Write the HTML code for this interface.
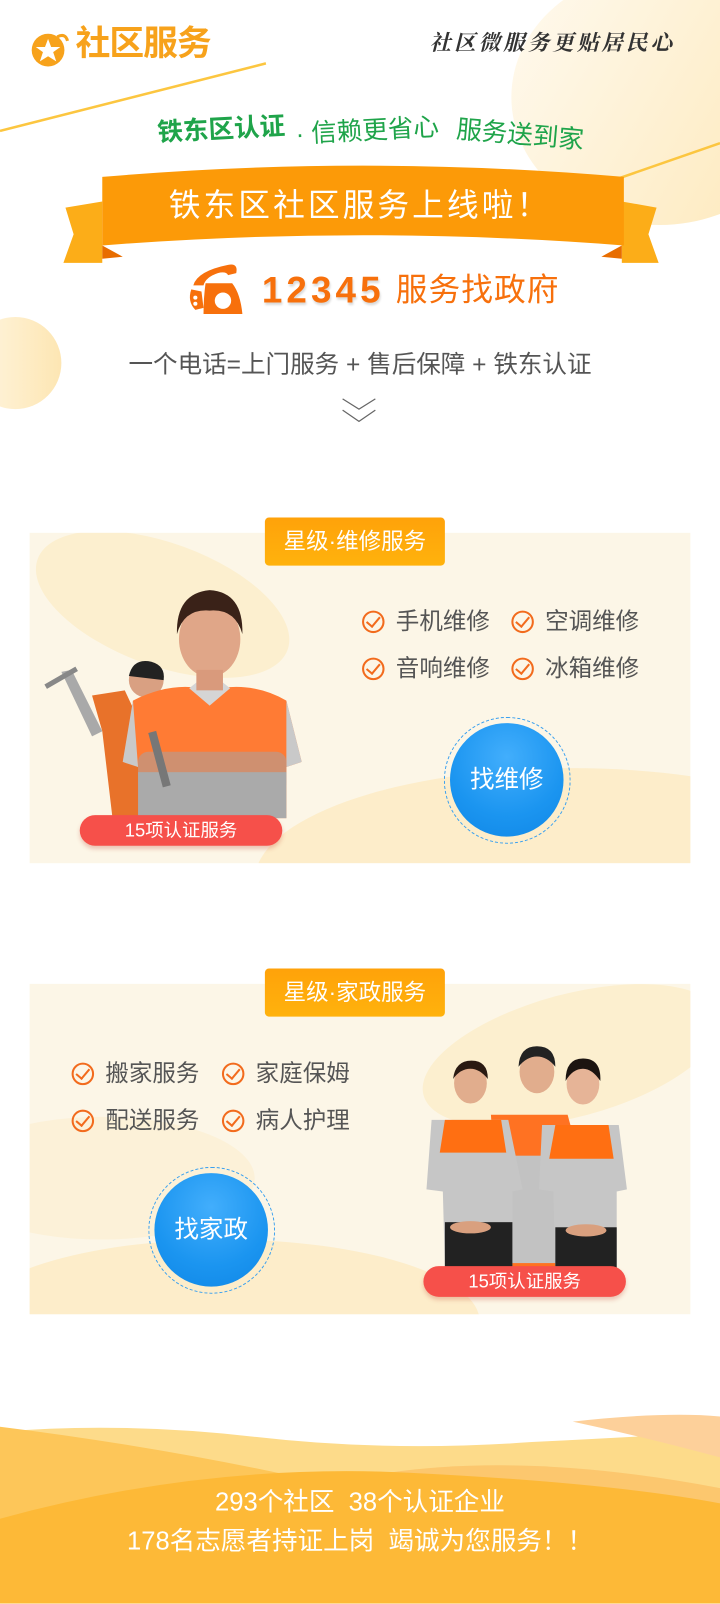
<!DOCTYPE html>
<html><head><meta charset="utf-8">
<style>
*{margin:0;padding:0;box-sizing:border-box}
html,body{width:720px;height:1604px;overflow:hidden;background:#fff}
#w{position:absolute;left:0;top:0;width:704px;height:1568px;transform:scale(1.02273);transform-origin:0 0;overflow:hidden;font-family:"Liberation Sans","Noto Sans CJK SC",sans-serif}
.a{position:absolute}
.t{position:absolute;white-space:nowrap;line-height:1}
.card{position:absolute;left:29px;width:646px;height:323px;background:#fcf6e7;overflow:hidden}
.tag{position:absolute;width:176px;height:47px;border-radius:4px;background:linear-gradient(#ffa20a,#ffb20c);color:#fff;font-size:22px;text-align:center;line-height:47px}
.chk{position:absolute;width:22px;height:22px;border:2px solid #f26b1d;border-radius:50%}
.chk:after{content:"";position:absolute;left:5px;top:1px;width:6px;height:11px;border-right:2.5px solid #f26b1d;border-bottom:2.5px solid #f26b1d;transform:rotate(40deg)}
.it{font-size:23px;color:#555}
.bc{position:absolute;width:124px;height:124px;border-radius:50%;border:1.5px dashed #3aa0ef}
.bc div{position:absolute;left:5px;top:5px;width:111px;height:111px;border-radius:50%;background:radial-gradient(circle at 50% 30%,#42aefc,#1b95f0 60%,#0f86e6);color:#fff;font-size:24px;text-align:center;line-height:111px}
.badge{position:absolute;width:198px;height:30px;border-radius:15px;background:#f6504a;color:#fff;font-size:18px;text-align:center;line-height:30px;box-shadow:0 3px 4px rgba(200,80,60,.3)}
</style></head><body><div id="w">

<div class="a" style="left:500px;top:-30px;width:290px;height:250px;border-radius:50%;background:linear-gradient(120deg,#fffaf0,#fde8b8)"></div>
<div class="a" style="left:-30px;top:310px;width:90px;height:90px;border-radius:50%;background:linear-gradient(90deg,#fff6e2,#fde6b3)"></div>
<svg class="a" style="left:0;top:0" width="704" height="260"><line x1="0" y1="128" x2="260" y2="62" stroke="#fcc640" stroke-width="2.5"/><line x1="560" y1="190" x2="704" y2="140" stroke="#fcc640" stroke-width="2.5"/></svg>

<svg class="a" style="left:28px;top:30px" width="40" height="36"><circle cx="19" cy="19" r="16" fill="#f7a21b"/><polygon points="19,8 22,16 31,16 24,21 27,30 19,25 11,30 14,21 7,16 16,16" fill="#fff"/><path d="M28 6 q8 -4 10 4" stroke="#f7a21b" stroke-width="3" fill="none"/></svg>
<div class="t" style="left:74px;top:26px;font-size:34px;font-weight:bold;color:#f7a21b;letter-spacing:-1px">社区服务</div>
<div class="t" style="left:420px;top:32px;font-size:21px;color:#333;font-family:'Liberation Serif','Noto Serif CJK SC',serif;font-weight:bold;letter-spacing:3px;font-style:italic">社区微服务更贴居民心</div>

<div class="t" style="left:154px;top:118px;font-size:25px;font-weight:bold;color:#1fa44a;transform:rotate(-3deg);transform-origin:left">铁东区认证</div>
<div class="t" style="left:289px;top:116px;font-size:25px;color:#1fa44a;transform:rotate(-3deg)">· 信赖更省心</div>
<div class="t" style="left:446px;top:120px;font-size:25px;color:#1fa44a;transform:rotate(5deg)">服务送到家</div>

<svg class="a" style="left:60px;top:155px" width="586" height="105">
<polygon points="4,48 40,42 40,102 2,102 12,74" fill="#fcad18"/>
<polygon points="582,48 548,42 548,102 584,102 574,74" fill="#fcad18"/>
<polygon points="40,85 60,96 40,98" fill="#e86d00"/>
<polygon points="548,85 528,96 548,98" fill="#e86d00"/>
<path d="M40 18 Q294 -4 550 18 L550 85 Q294 65 40 85 Z" fill="#fc9a08"/>
</svg>
<div class="t" style="left:0;width:704px;text-align:center;top:185px;font-size:31px;color:#fff;letter-spacing:3px">铁东区社区服务上线啦！</div>

<svg class="a" style="left:183px;top:257px" width="60" height="56">
<path d="M6 22 Q10 8 40 2 Q50 0 48 10 L40 12 Q38 8 30 10 Q18 14 16 22 Z" fill="#f7700c"/>
<path d="M18 20 L44 20 Q52 30 54 50 L16 50 Q16 34 18 20 Z" fill="#f7700c"/>
<circle cx="35" cy="37" r="8" fill="#fff"/>
<path d="M4 26 Q0 38 8 46 L16 44 L14 28 Z" fill="#f7700c"/>
<circle cx="8" cy="34" r="2" fill="#fff"/><circle cx="8" cy="40" r="2" fill="#fff"/>
</svg>
<div class="t" style="left:256px;top:266px;font-size:36px;font-weight:bold;color:#f7700c;letter-spacing:4px;text-shadow:1px 2px 2px rgba(0,0,0,.15)">12345</div>
<div class="t" style="left:387px;top:268px;font-size:31px;color:#f7700c;letter-spacing:1px">服务找政府</div>

<div class="t" style="left:0;width:704px;text-align:center;top:345px;font-size:24px;color:#555">一个电话=上门服务 + 售后保障 + 铁东认证</div>
<svg class="a" style="left:333px;top:388px" width="36" height="28"><path d="M2 2 L18 12 L34 2 M2 13 L18 24 L34 13" stroke="#666" stroke-width="1.2" fill="none"/></svg>

<div class="card" style="top:521px">
<div class="a" style="left:0;top:10px;width:260px;height:120px;border-radius:50%;background:#fcefcf;transform:rotate(20deg)"></div>
<div class="a" style="left:220px;top:230px;width:620px;height:220px;border-radius:50%;background:#fde9bd;opacity:.7"></div>
</div>
<div class="tag" style="left:259px;top:506px">星级·维修服务</div>
<div class="chk" style="left:354px;top:597px"></div><div class="t it" style="left:387px;top:596px">手机维修</div>
<div class="chk" style="left:500px;top:597px"></div><div class="t it" style="left:533px;top:596px">空调维修</div>
<div class="chk" style="left:354px;top:643px"></div><div class="t it" style="left:387px;top:642px">音响维修</div>
<div class="chk" style="left:500px;top:643px"></div><div class="t it" style="left:533px;top:642px">冰箱维修</div>
<svg class="a" style="left:40px;top:565px" width="260" height="240">
<path d="M50 115 L82 110 L110 170 L110 235 L70 235 L60 150 Z" fill="#e8722a"/>
<path d="M20 92 L30 90 L60 150 L50 155 Z" fill="#a9a9a9"/>
<circle cx="103" cy="100" r="17" fill="#d9a082"/><path d="M86 96 Q90 78 108 82 Q122 86 120 100 Z" fill="#222"/>
<rect x="2" y="95" width="35" height="5" fill="#888" transform="rotate(-30 20 97)"/>
<path d="M90 120 Q130 100 165 110 Q205 100 240 120 L255 180 L240 185 L240 235 L95 235 L95 185 L80 180 Z" fill="#ff7b34"/>
<path d="M90 120 L80 180 L95 185 Z M240 120 L255 180 L240 185 Z" fill="#c9c9c9"/>
<path d="M145 108 L165 125 L185 108 L175 100 L155 100 Z" fill="#d5d5d5"/>
<rect x="95" y="170" width="145" height="40" rx="10" fill="#cf9070"/>
<rect x="95" y="190" width="145" height="45" fill="#aaa"/>
<rect x="110" y="150" width="8" height="55" fill="#777" transform="rotate(-15 114 170)"/>
<ellipse cx="165" cy="60" rx="30" ry="37" fill="#e0a688"/>
<path d="M133 55 Q132 15 165 12 Q198 14 197 55 Q190 30 165 32 Q140 30 133 55 Z" fill="#3a2218"/>
<rect x="152" y="90" width="26" height="20" fill="#d99a7c"/>
</svg>
<div class="badge" style="left:78px;top:797px">15项认证服务</div>
<div class="bc" style="left:434px;top:701px"><div>找维修</div></div>

<div class="card" style="top:962px">
<div class="a" style="left:380px;top:10px;width:300px;height:120px;border-radius:50%;background:#fcefcf;transform:rotate(-15deg)"></div>
<div class="a" style="left:-60px;top:250px;width:500px;height:160px;border-radius:50%;background:#fde9bd;opacity:.7"></div>
<div class="a" style="left:-80px;top:130px;width:300px;height:120px;border-radius:50%;background:#fcefcf;opacity:.6"></div>
</div>
<div class="tag" style="left:259px;top:947px">星级·家政服务</div>
<div class="chk" style="left:70px;top:1039px"></div><div class="t it" style="left:103px;top:1038px">搬家服务</div>
<div class="chk" style="left:217px;top:1039px"></div><div class="t it" style="left:250px;top:1038px">家庭保姆</div>
<div class="chk" style="left:70px;top:1085px"></div><div class="t it" style="left:103px;top:1084px">配送服务</div>
<div class="chk" style="left:217px;top:1085px"></div><div class="t it" style="left:250px;top:1084px">病人护理</div>
<div class="bc" style="left:145px;top:1141px"><div>找家政</div></div>
<svg class="a" style="left:405px;top:1015px" width="215" height="225">
<path d="M75 75 L150 75 L165 130 L165 225 L85 225 Z" fill="#ff7222"/>
<rect x="95" y="115" width="60" height="105" fill="#c2c2c2"/>
<ellipse cx="120" cy="33" rx="17" ry="21" fill="#e1ad8d"/><path d="M102 28 Q103 8 120 8 Q138 8 138 28 Q130 18 120 18 Q110 18 102 28Z" fill="#222"/>
<path d="M17 80 L92 80 L106 148 L96 150 L96 225 L30 225 L28 150 L12 148 Z" fill="#c6c6c6"/>
<path d="M30 80 L85 80 L90 112 L25 112 Z" fill="#ff6f12"/>
<rect x="30" y="180" width="66" height="45" fill="#222"/>
<ellipse cx="55" cy="44" rx="16" ry="20" fill="#e1ad8d"/><path d="M38 40 Q40 22 56 22 Q72 22 72 40 Q64 30 55 30 Q45 30 38 40Z" fill="#2a1a12"/>
<ellipse cx="55" cy="185" rx="20" ry="6" fill="#d9a07f"/>
<path d="M125 85 L200 85 L208 148 L198 150 L198 225 L138 225 L136 150 L122 148 Z" fill="#c6c6c6"/>
<path d="M138 85 L190 85 L195 118 L132 118 Z" fill="#ff6f12"/>
<rect x="138" y="185" width="60" height="40" fill="#222"/>
<ellipse cx="165" cy="45" rx="16" ry="20" fill="#e6b497"/><path d="M148 42 Q148 20 165 20 Q183 20 182 42 Q174 30 165 30 Q155 30 148 42Z" fill="#1c1410"/>
<ellipse cx="168" cy="188" rx="20" ry="6" fill="#d9a07f"/>
</svg>
<div class="badge" style="left:414px;top:1238px">15项认证服务</div>

<svg class="a" style="left:0;top:1380px" width="704" height="188">
<path d="M0 20 Q120 10 250 25 T520 30 Q620 25 704 20 L704 188 L0 188 Z" fill="#fddb8a"/>
<path d="M0 15 Q200 40 380 85 Q560 100 704 90 L704 188 L0 188 Z" fill="#fdc659"/>
<path d="M380 60 Q520 40 704 75 L704 188 L380 188 Z" fill="#fcb95c" opacity=".6"/>
<path d="M0 105 Q200 50 400 60 Q600 70 704 90 L704 188 L0 188 Z" fill="#fdb937"/>
<path d="M560 10 Q650 0 704 5 L704 45 Q630 25 560 10 Z" fill="#fdd09a"/>
</svg>
<div class="t" style="left:0;width:704px;text-align:center;top:1457px;font-size:25px;color:#fff">293个社区&nbsp; 38个认证企业</div>
<div class="t" style="left:0;width:704px;text-align:center;top:1495px;font-size:25px;color:#fff">178名志愿者持证上岗&nbsp; 竭诚为您服务！！</div>

</div></body></html>
